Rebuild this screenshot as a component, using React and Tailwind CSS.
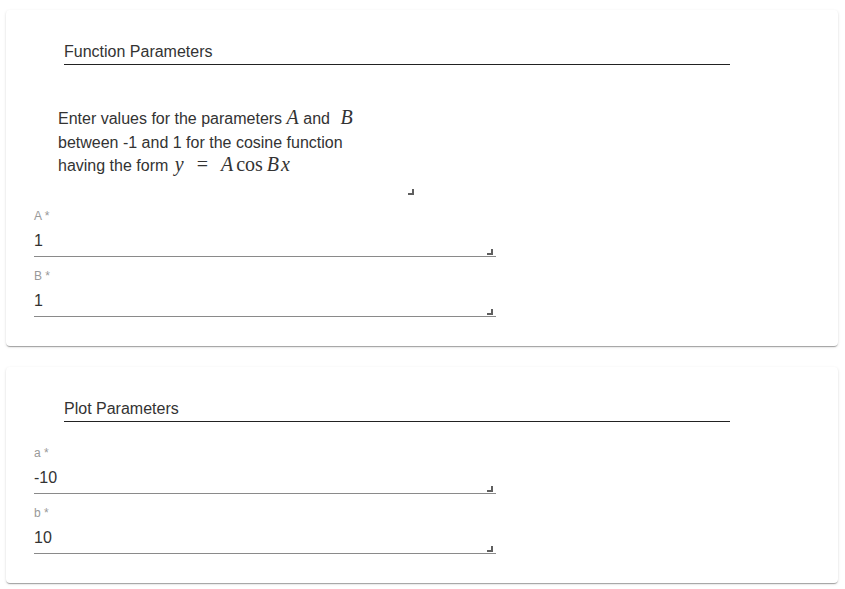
import React from "react";

const math = "font-['Liberation_Serif',serif] italic text-[20px] leading-none";
const mathUp = "font-['Liberation_Serif',serif] text-[20px] leading-none";

function Grip() {
  return (
    <svg width="6" height="6" viewBox="0 0 6 6" className="block">
      <path d="M4 0h2v6H0V4h4z" fill="#5f5f5f" />
    </svg>
  );
}

function SectionTitle({ children }) {
  return (
    <div className="ml-[58px] w-[666px] h-[25px] border-b border-[#222] text-[16px] leading-[24px] text-[#333]">
      {children}
    </div>
  );
}

function Field({ label, value }) {
  return (
    <div className="ml-[28px] w-[462px] pt-[11px]">
      <div className="text-[12px] leading-[16px] text-[#999]">{label} *</div>
      <div className="relative mt-[5px] pb-[3px] border-b border-[#8a8a8a]">
        <div className="text-[16px] leading-[24px] text-[#333]">{value}</div>
        <div className="absolute right-[3px] bottom-[1px]">
          <Grip />
        </div>
      </div>
    </div>
  );
}

export default function App() {
  return (
    <div className="min-h-screen bg-white px-[6px] pt-[10px] font-['Liberation_Sans',Arial,sans-serif] text-[#333]">

      {/* Function parameters card */}
      <div className="w-[832px] bg-white rounded shadow-[0_2px_1px_-1px_rgba(0,0,0,0.2),0_1px_1px_0_rgba(0,0,0,0.14),0_1px_3px_0_rgba(0,0,0,0.12)] pt-[30px] pb-[29px]">
        <SectionTitle>Function Parameters</SectionTitle>

        <div className="relative ml-[52px] mt-[42px] w-[356px] h-[90px]">
          <p className="text-[16px] leading-[23.5px] text-[#333] whitespace-nowrap">
            Enter values for the parameters <span className={math}>A</span> and <span className={`${math} ml-[6px]`}>B</span>
            <br />
            between -1 and 1 for the cosine function
            <br />
            having the form <span className={`${math} ml-[2px]`}>y</span>
            <span className={`${mathUp} mx-[13px]`}>=</span>
            <span className={math}>A</span>
            <span className={`${mathUp} ml-[3px] mr-[4px]`}>cos</span>
            <span className={math}>B</span>
            <span className={`${math} ml-[2px]`}>x</span>
          </p>
          <div className="absolute right-0 bottom-[2px]">
            <Grip />
          </div>
        </div>

        <Field label="A" value="1" />
        <Field label="B" value="1" />
      </div>

      {/* Plot parameters card */}
      <div className="mt-[21px] w-[832px] bg-white rounded shadow-[0_2px_1px_-1px_rgba(0,0,0,0.2),0_1px_1px_0_rgba(0,0,0,0.14),0_1px_3px_0_rgba(0,0,0,0.12)] pt-[30px] pb-[29px]">
        <SectionTitle>Plot Parameters</SectionTitle>
        <div className="mt-[12px]">
          <Field label="a" value="-10" />
          <Field label="b" value="10" />
        </div>
      </div>
    </div>
  );
}
